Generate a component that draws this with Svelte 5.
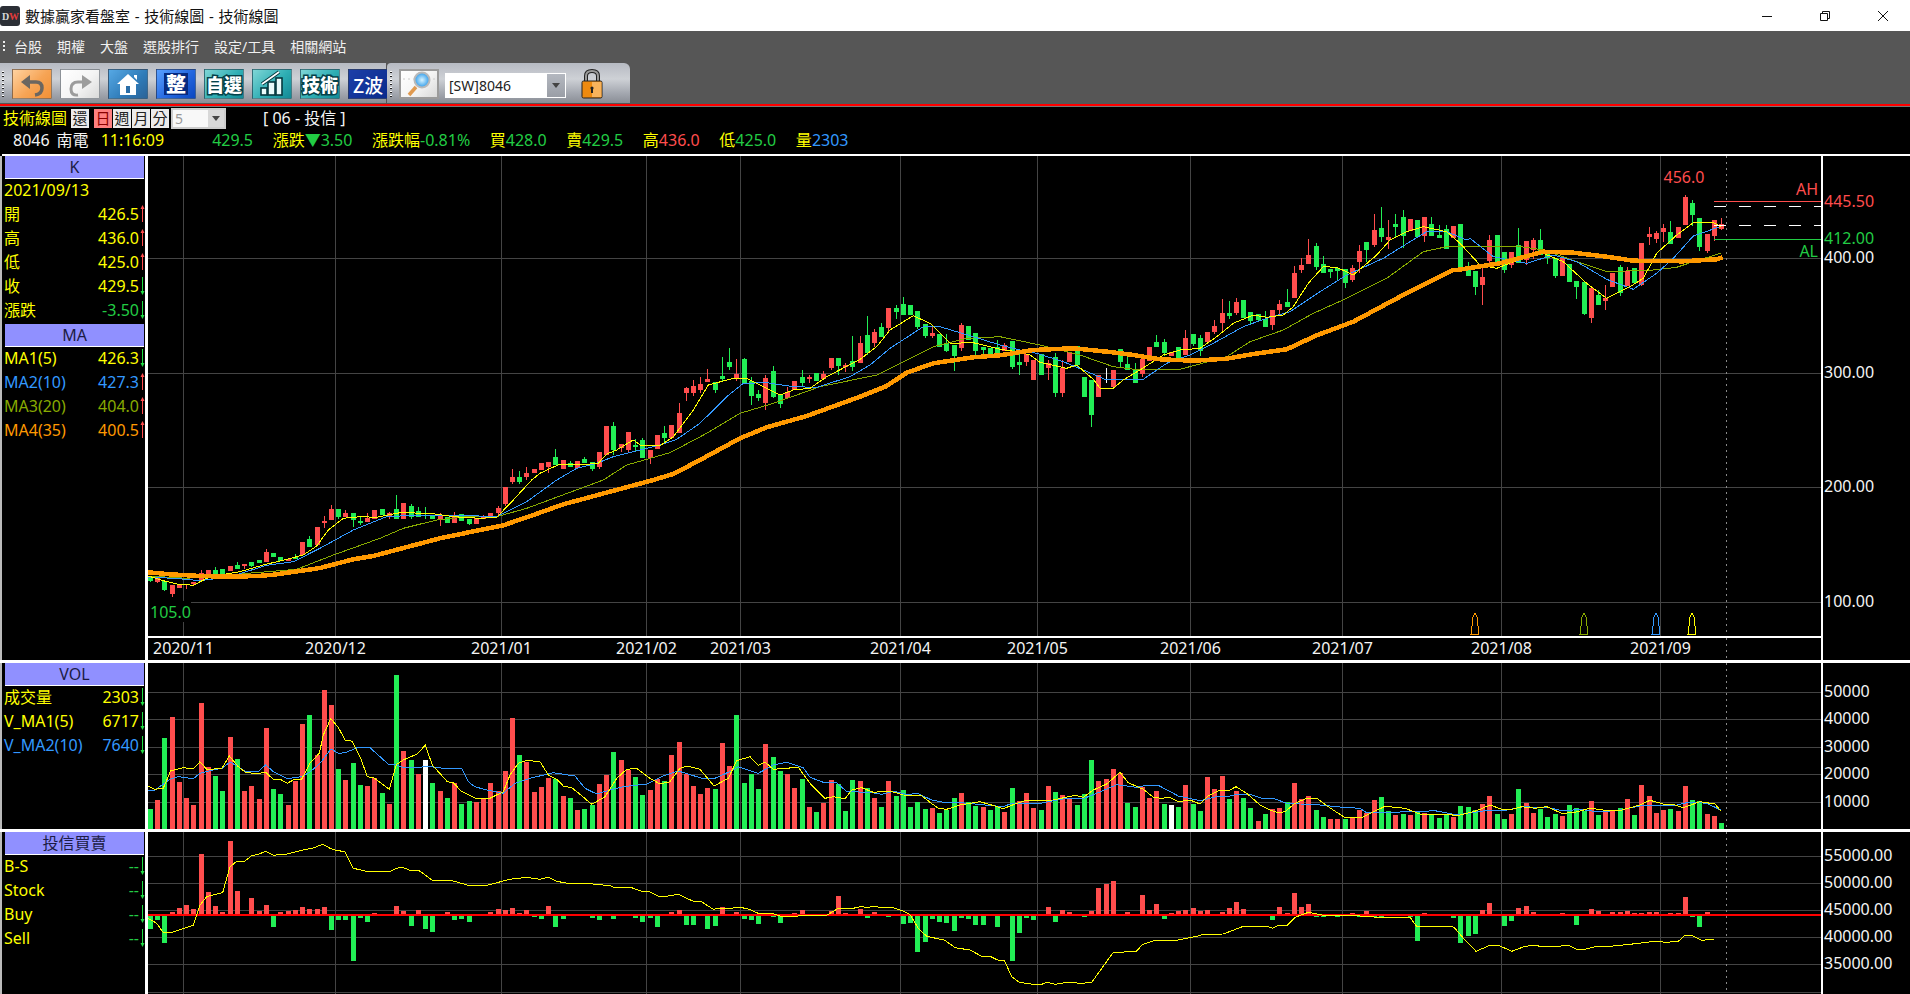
<script>
  const barX = (i) => Math.round(148 + 7.24 * i);

  const vol = [-20,29,-91,112,47,31,24,126,62,-53,-38,92,-70,38,43,30,101,-40,-35,24,48,105,-114,74,139,124,-60,49,-66,-44,43,51,-36,25,-154,78,-69,55,69,-46,38,-31,46,-25,-28,27,30,46,38,
    58,111,-74,67,37,42,51,-50,33,-31,19,-20,-24,45,54,-77,69,59,-52,-34,39,50,-48,74,87,55,43,35,41,-40,86,63,-114,-46,-55,-40,85,-72,-58,55,41,-50,22,-17,26,49,-45,-18,-49,48,-41,31,-22,48,-33,-39,-22,-27,-20,21,-16,-19,-31,36,-27,
    -23,22,-19,-23,17,-41,28,36,21,-19,43,-37,34,31,-24,-35,-69,48,50,60,56,-26,-22,42,31,38,-25,24,-22,44,-25,-18,52,40,53,-30,38,-31,-21,8,-15,20,21,-27,46,30,33,-19,-12,10,10,-10,11,19,16,29,-32,-18,14,
    -15,14,-18,16,-14,-11,-14,12,-23,-22,-19,25,33,-15,-10,15,-40,26,16,-20,-12,-15,13,-24,-21,-18,28,-14,19,19,-21,30,-14,44,33,16,19,-20,18,43,-29,-28,15,13,-6];
  const volWhite = new Set([38, 141]);

  const flow = [-14,-5,-28,2,6,9,5,60,22,8,2,73,23,0,16,3,9,-12,2,3,4,7,5,5,7,-15,-5,-5,-46,-3,-7,1,0,0,8,3,-11,4,-14,-17,-1,2,-5,-4,-7,0,0,2,5,
    4,6,1,4,-2,-4,8,-12,-4,-1,0,0,-3,-5,0,-4,-1,0,-3,-7,-3,-12,0,2,4,-10,-10,-1,-14,-11,7,-1,2,-4,-5,-9,0,-2,-8,0,1,4,-1,-1,0,3,18,1,0,5,-3,2,-1,-2,-1,-9,-8,-37,-27,-4,-7,-8,-16,-3,-4,
    -10,-10,0,-12,0,-46,-18,-3,-5,-1,7,-7,4,2,0,-2,3,26,30,33,0,2,0,19,4,10,-4,1,3,4,6,3,4,0,2,6,12,5,-1,0,0,-5,7,1,21,7,10,-2,-2,-1,-2,0,1,-2,3,-2,-2,0,0,
    0,-2,-26,1,0,0,0,-3,-28,-21,-19,4,11,0,-11,-6,6,8,2,0,0,0,1,-1,-10,0,5,3,0,2,2,3,1,1,2,2,0,1,1,17,-2,-12,2,0,0];

  // candles: colour, body top, body bottom, wick top, wick bottom (in 3x crop rows, by origin)
  const c1 = [['g',352,364,352,366],['r',355,365,352,368],['g',364,390,362,393],['r',375,402,375,410],['r',372,384,372,384],['r',372,375,372,388],['r',366,372,366,376],['r',340,360,330,362],['r',330,350,330,350],['g',330,342,322,342],['g',326,342,326,342],['r',318,334,318,334],['g',316,328,306,328],['r',312,318,312,328],['g',306,318,306,322],['g',300,310,300,310],['r',276,306,268,306],['g',280,292,280,292],['g',292,302,292,304],['r',296,304,296,304],['g',290,296,282,296],['r',246,286,246,286],['g',237,260,228,260],['r',201,254,201,254],['r',183,188,168,204],['r',147,180,135,180],['g',147,172,147,178],['r',158,172,150,172],['g',160,180,160,202],['g',183,188,168,194],['r',175,186,158,186],['r',150,178,150,178],['g',147,166,147,166],['r',160,172,155,178],['g',147,177,105,177],['r',129,177,129,177],['g',138,172,132,178],['g',154,170,140,170],['g',159,160,140,178],['g',165,178,165,178],['r',165,178,160,198],['g',170,188,170,188],['r',165,190,156,190],['g',162,184,162,184],['g',177,192,177,194],['r',174,192,174,192],['r',168,178,166,178],['r',158,172,158,172],['r',144,158,138,165],['r',82,132,82,138]];
  const c2 = [['r',590,606,568,612],['g',590,606,574,612],['r',578,590,562,600],['r',567,580,567,580],['r',549,570,549,570],['r',545,562,545,578],['g',531,555,507,555],['r',540,568,540,568],['g',548,562,544,562],['r',543,565,543,565],['g',537,550,530,550],['g',546,568,546,574],['r',516,560,516,566],['r',438,525,438,525],['g',438,510,426,525],['r',492,505,492,516],['r',456,510,456,516],['g',495,501,478,515],['g',480,534,475,534],['r',510,534,510,552],['r',465,507,465,507],['g',459,474,438,490],['r',435,475,435,475],['r',399,460,370,460],['r',324,339,320,362],['r',318,340,300,348],['r',312,330,292,338],['r',297,306,267,306],['g',306,330,306,338],['g',288,297,232,306],['g',246,261,205,270],['r',282,297,238,303],['g',237,312,234,312],['g',303,348,292,375],['g',342,354,330,362],['r',294,370,285,390],['g',273,351,258,354],['g',345,372,345,384],['r',336,354,322,354],['r',303,330,303,330],['g',291,309,270,318],['r',291,297,284,308],['g',279,303,279,303],['r',282,296,273,296],['r',234,264,234,270],['g',234,258,234,285],['r',254,261,250,275],['g',243,261,168,273],['r',189,249,168,249],['g',165,219,108,225],['r',156,189,147,200],['g',141,171,129,171],['r',84,144,84,153],['g',84,96,75,117],['g',72,105,52,105],['g',75,105,75,105],['g',93,141,93,147],['g',132,168,132,174],['r',159,168,135,174],['g',162,200,162,200],['g',189,213,162,216],['g',195,228,195,272],['r',135,204,130,213],['g',138,180,138,180],['g',159,212,159,225],['g',201,210,201,225],['g',204,225,204,225],['g',200,222,180,222]];
  const c3 = [['r',495,513,490,513],['g',483,561,483,567],['g',546,555,520,585],['r',522,546,522,558],['r',540,600,540,600],['g',522,585,522,585],['r',550,565,540,600],['g',531,640,520,650],['r',565,640,540,650],['r',516,546,516,546],['g',498,555,498,565],['g',591,650,591,650],['g',600,705,600,741],['r',585,650,585,650],['w',565,610,565,610],['r',570,620,570,620],['g',507,546,507,565],['g',552,570,528,570],['g',568,610,550,610],['r',538,582,530,590],['r',501,543,501,543],['g',486,501,465,501],['g',486,519,478,528],['r',516,528,516,528],['g',501,533,501,533],['r',474,525,450,525],['g',462,492,462,498],['g',474,513,466,528],['r',456,486,456,486],['r',438,456,420,462],['r',399,430,357,453],['g',399,408,363,417],['r',366,399,354,405],['g',360,414,360,414],['g',396,423,396,432],['g',402,420,402,423],['g',417,441,394,441],['r',390,435,390,450],['r',372,390,360,405],['g',366,381,327,381],['r',279,354,258,354],['r',255,270,234,278],['r',225,252,177,252],['g',198,261,189,270],['g',252,279,228,279],['g',267,276,267,294],['g',264,272,264,300],['g',267,309,267,324],['r',264,300,255,306],['r',213,246,195,279],['g',186,210,186,246],['r',150,195,102,200],['g',144,171,81,186],['r',171,180,120,207],['g',132,141,102,170]];
  const c4 = [['g',201,258,180,295],['r',207,243,207,243],['g',210,261,210,261],['r',201,258,201,275],['g',222,258,200,258],['g',255,264,225,264],['g',237,297,225,297],['r',228,264,228,264],['g',222,355,222,355],['g',360,378,336,378],['g',363,411,363,435],['r',381,405,355,465],['r',270,333,255,345],['g',255,336,255,336],['g',306,360,306,370],['r',306,345,306,355],['g',285,340,235,340],['r',273,330,273,345],['r',270,300,265,328],['g',270,315,237,315],['g',306,325,306,342],['g',324,378,324,384],['r',324,378,324,378],['g',342,396,342,396],['g',393,411,393,447],['g',396,492,396,495],['r',414,504,414,520],['g',435,465,420,465],['r',444,453,405,480],['r',369,411,369,411],['g',351,429,345,438],['r',363,408,350,408],['g',354,399,354,399],['r',279,405,279,408],['r',252,261,232,285],['r',249,267,243,279],['r',234,245,222,275],['g',246,282,213,282],['r',231,264,231,264],['r',141,225,135,225],['g',159,195,150,228],['g',204,291,204,303],['r',252,303,252,309],['r',210,258,210,272],['r',222,237,204,240]];

  const toCandle = (oy) => (c) => ({ c: c[0], t: oy + c[1] / 3, b: oy + c[2] / 3, wt: oy + c[3] / 3, wb: oy + c[4] / 3 });
  const candles = [...c1.map(toCandle(460)), ...c2.map(toCandle(280)), ...c3.map(toCandle(180)), ...c4.map(toCandle(150))];

  // polyline helper: groups of [ox, oy, [X,Y,X,Y...]] read from 3x crops
  function line(groups) {
    const out = [];
    let last = -1;
    for (const [ox, oy, p] of groups) {
      for (let k = 0; k < p.length; k += 2) {
        const x = ox + p[k] / 3;
        const y = oy + p[k + 1] / 3;
        if (x > last) { out.push(`${x.toFixed(1)},${y.toFixed(1)}`); last = x; }
      }
    }
    return out.join(' ');
  }

  const ma4 = line([
    [120,460,[85,337,150,343,240,348,330,350,415,348,460,344,540,333,600,324,700,298,760,288,850,264,960,235,1080,210,1150,196]],
    [120,460,[1240,165,1330,133]],
    [500,280,[460,600,520,582,600,540,720,475,800,442,920,408,1080,350,1160,318,1220,278,1300,250,1420,232,1500,226]],
    [1000,180,[100,510,220,505,330,516,400,525,480,538,580,542,680,536,760,522,860,508,950,466,1060,425,1200,350]],
    [1000,180,[1300,300,1360,270]],
    [1400,150,[170,360,300,340,430,305,520,308,620,320,700,332,850,334,950,328,968,322]]
  ]);
  const ma1 = line([
    [120,460,[85,348,130,362,170,372,220,376,260,355,300,345,360,335,430,315,500,298,550,285,590,258,625,210,670,175,720,170,770,172,840,158,930,160,1000,170,1080,175,1130,172,1180,120]],
    [500,280,[95,600,120,580,180,552,270,552,295,550,320,522,350,510,400,480,425,498,480,497,520,470,580,390,625,315,700,295,740,295,800,325,840,345,880,330,930,325,980,290,1080,238,1130,200,1170,150,1240,107,1290,130,1350,190,1420,188,1500,208]],
    [1000,180,[50,515,90,525,120,547,200,565,230,555,280,598,300,625,340,625,370,600,420,570,490,525,540,510,600,505,650,470,700,430,760,405,800,412,850,405,880,380,925,310,970,260,1010,262,1060,285,1130,225,1170,180]],
    [1000,180,[1220,155,1270,140,1340,155,1380,190]],
    [1400,150,[130,240,175,255,240,345,290,355,340,335,430,310,490,335,560,400,620,445,690,410,730,385,770,310,830,255,880,218,940,218,962,230]]
  ]);
  const ma2 = line([
    [120,460,[85,352,165,355,240,362,330,350,440,316,520,305,600,265,700,210,800,170,900,165,1000,165,1130,170,1220,125]],
    [500,280,[170,600,230,565,290,550,340,530,420,510,480,495,530,478,600,430,680,350,730,310,800,308,880,320,950,322,1050,290,1110,255,1170,205,1270,140,1320,140,1420,170,1500,195]],
    [1000,180,[60,510,110,520,190,545,250,570,320,600,430,598,500,550,570,525,640,490,730,440,800,415,870,395,960,335,1040,285,1150,235,1230,185]],
    [1000,180,[1280,155,1340,155,1400,180]],
    [1400,150,[60,255,160,245,210,265,280,320,380,340,460,315,530,335,620,388,700,418,770,370,820,325,880,258,960,230]]
  ]);
  const ma3 = line([
    [120,460,[85,348,200,355,530,328,640,285,780,235,850,205,950,180,1040,170,1130,170,1220,145]],
    [500,280,[310,600,380,555,510,518,620,460,720,400,820,370,960,320,1130,285,1190,255,1300,200,1400,175,1500,170]],
    [1000,180,[120,495,240,525,340,560,420,570,540,568,680,530,750,485,850,450,940,400,1040,355,1160,295]],
    [1000,180,[1270,215,1340,200]],
    [1400,150,[60,310,130,293,230,290,350,288,430,300,560,345,620,365,760,360,830,352,880,335,962,310]]
  ]);

  const vma1 = line([
    [0,650,[444,408,465,418,490,415,512,362,550,353,580,356,600,335,620,358,665,356,688,318,715,350,735,366,770,372,796,366,820,388,841,388,862,400,885,387,905,387,930,340,958,310,970,255,992,206,1015,232,1035,270,1057,274,1082,325,1102,380,1123,384,1168,418,1189,344,1210,330,1252,312,1276,285,1297,345,1342,395,1360,398,1384,424,1424,444,1470,445]],
    [490,690,[40,305,60,255,85,220,110,211,150,215,175,255,200,268,220,288,245,293,270,313,305,343,345,320,380,265,410,238,440,235,480,265,510,282,540,275,570,235,590,228,630,238,672,288,715,265,740,212,780,200,805,226,825,216,850,238,925,232,960,280,1005,325,1030,320,1065,326,1085,300,1115,293,1150,307,1200,303,1240,315,1295,317,1320,337,1345,355,1370,358,1410,345]],
    [970,690,[30,335,75,348,100,356,140,340,170,331,250,330,315,316,340,322,370,300,410,282,450,247,475,278,520,298,550,322,575,325,600,322,625,335,660,330,690,342,715,318,745,303,780,300,798,290,830,310,870,345,900,360,925,368,945,365,975,340,1010,325,1040,325,1075,350,1125,383,1180,381,1205,368,1245,349]],
    [1400,620,[15,565,60,582,145,582,170,588,230,572,270,555,305,568,335,568,365,560,405,565,440,560,485,580,520,578,570,565,610,570,665,570,720,555,750,541,790,552,815,552,850,563,900,545,945,552,962,572]]
  ]);
  const vma2 = line([
    [0,650,[444,420,465,420,510,388,535,380,580,386,600,370,646,358,665,356,690,336,715,350,735,364,775,365,797,344,820,365,862,386,905,380,930,366,960,340,993,297,1015,310,1035,308,1075,292,1110,293,1140,320,1168,345,1189,344,1210,353,1290,350,1340,356,1385,355,1405,395,1424,410,1460,420]],
    [490,690,[40,310,75,280,120,265,190,248,255,258,285,295,320,312,360,300,400,290,470,282,520,258,565,243,640,266,672,266,730,240,745,230,805,250,850,225,890,217,940,233,960,262,1000,277,1040,278,1070,305,1140,307,1175,313,1210,304,1250,313,1285,311,1325,330,1360,337,1400,337]],
    [970,690,[100,350,125,340,200,342,250,332,290,325,340,326,380,310,440,284,500,292,530,286,565,286,625,318,690,332,740,320,780,318,800,313,840,313,875,325,910,325,950,340,1050,345,1120,352,1170,355,1190,368,1250,367]],
    [1400,620,[45,575,105,572,170,585,250,573,310,572,370,560,450,564,490,573,540,568,590,575,650,572,720,558,770,556,830,555,870,546,920,550,962,570]]
  ]);
  const flowLine = line([
    [0,650,[444,805,470,820,490,848,520,846,560,832,580,826,600,765,620,740,650,732,668,728,690,650,710,634,735,633,755,617,775,613,797,604,820,616,860,612,900,602,940,594,968,583,990,595,1008,601,1035,605,1060,655,1100,664,1170,664,1190,655,1208,652,1232,662,1255,660,1297,691,1352,691,1405,706,1460,706]],
    [490,690,[60,568,110,562,150,568,175,562,200,574,232,580,300,581,360,587,370,592,425,593,455,604,480,606,505,619,530,619,565,613,610,634,632,634,670,658,690,654,720,655,750,652,775,657,805,670,850,671,870,678,925,678,950,676,1010,676,1045,655,1090,655,1110,650,1135,652,1150,649,1170,652,1205,652,1240,663,1260,674,1285,715,1310,739,1365,751,1395,773,1440,780]],
    [970,690,[35,799,60,799,85,811,103,811,125,860,148,877,190,883,215,883,230,877,255,883,290,877,335,880,365,877,430,787,498,785,517,764,555,751,615,752,680,739,700,733,760,732,820,709,890,709,908,715,925,706,952,706,975,682,1015,667,1055,675,1095,676,1170,678,1225,682,1290,682]],
    [1400,620,[30,892,50,919,150,919,162,922,195,960,228,994,270,976,296,976,335,994,375,979,405,976,420,979,475,979,505,976,530,988,555,988,590,979,630,979,690,973,740,967,760,964,800,967,835,964,855,946,880,948,905,961,941,958]]
  ]);

  const monthX = [183, 335, 501, 646, 740, 900, 1037, 1190, 1342, 1501, 1660];
  const monthLabels = ['2020/11','2020/12','2021/01','2021/02','2021/03','2021/04','2021/05','2021/06','2021/07','2021/08','2021/09'];
  const markers = [[1475,'#ff9900'],[1584,'#88aa00'],[1656,'#3399ff'],[1692,'#ffff00']];

  const kRows = [['開','426.5','up'],['高','436.0','up'],['低','425.0','up'],['收','429.5','down']];
  const maRows = [['MA1(5)','426.3','down','yel'],['MA2(10)','427.3','up','blu'],['MA3(20)','404.0','up','oli'],['MA4(35)','400.5','up','ora']];
  const volRows = [['成交量','2303','yel'],['V_MA1(5)','6717','yel'],['V_MA2(10)','7640','blu']];
  const flowRows = ['B-S','Stock','Buy','Sell'];

  const bar = { r: '#ff4d4d', g: '#22ee55', w: '#ffffff' };
</script>

{#snippet arrow(dir)}
  <svg class="arr" width="5" height="18" viewBox="0 0 5 18">
    {#if dir === 'up'}
      <path d="M2.5 17V1" stroke="#ff4d4d" fill="none"/><path d="M0.5 4L2.5 0L4.5 4Z" fill="#ff4d4d"/>
    {:else}
      <path d="M2.5 0V16" stroke="#22dd44" fill="none"/><path d="M0.5 14L2.5 18L4.5 14Z" fill="#22dd44"/>
    {/if}
  </svg>
{/snippet}

{#snippet grid(top, bottom, ys)}
  {#each ys as y}<rect x="148" y={y} width="1673" height="1" fill="#444"/>{/each}
  {#each monthX as x}<rect x={x} y={top} width="1" height={bottom - top} fill="#444"/>{/each}
{/snippet}

<div class="app">
  <header class="title">
    <svg class="logo" width="20" height="20" viewBox="0 0 20 20">
      <rect width="20" height="20" rx="3" fill="#2b2f36"/>
      <text x="2" y="14" class="logotxt" fill="#d8d8d8">D</text>
      <text x="9" y="14" class="logotxt" fill="#e23b3b">W</text>
    </svg>
    <span class="ttl">數據贏家看盤室 - 技術線圖 - 技術線圖</span>
    <div class="win">
      <svg width="12" height="12" viewBox="0 0 12 12"><path d="M1 6.5H11" stroke="#111" fill="none"/></svg>
      <svg width="12" height="12" viewBox="0 0 12 12"><path d="M1.5 3.5H8.5V10.5H1.5ZM3.5 3.5V1.5H10.5V8.5H8.5" stroke="#111" fill="none"/></svg>
      <svg width="12" height="12" viewBox="0 0 12 12"><path d="M1 1L11 11M11 1L1 11" stroke="#111" fill="none"/></svg>
    </div>
  </header>

  <nav class="menu">
    <i class="grip"></i>
    <span>台股</span><span>期權</span><span>大盤</span><span>選股排行</span><span>設定/工具</span><span>相關網站</span>
  </nav>

  <div class="toolbar">
    <div class="tb tb1">
      <i class="grip dark"></i>
      <button class="btn orange" aria-label="back">
        <svg width="40" height="30" viewBox="0 0 40 30"><path d="M18 13H24Q30 13 30 19T23 26" stroke="#6b6660" stroke-width="3.5" fill="none"/><path d="M9 13L18 6V20Z" fill="#6b6660"/></svg>
      </button>
      <button class="btn white" aria-label="forward">
        <svg width="40" height="30" viewBox="0 0 40 30"><path d="M22 13H18Q11 13 11 20T18 26" stroke="#9c9c9c" stroke-width="3" fill="none"/><path d="M32 13L22 6V20Z" fill="#9c9c9c"/></svg>
      </button>
      <button class="btn home" aria-label="home">
        <svg width="40" height="30" viewBox="0 0 40 30"><path d="M20 5L31 15H28V26H12V15H9ZM26 6H29V11L26 8Z" fill="#fff"/><rect x="18" y="17" width="4" height="7" fill="#2a6ea8"/></svg>
      </button>
      <button class="btn blue"><b class="sq">整</b></button>
      <button class="btn teal"><b class="tt">自選</b></button>
      <button class="btn teal" aria-label="chart">
        <svg width="40" height="30" viewBox="0 0 40 30"><g fill="#e9fbfb" stroke="#06393f" stroke-width="1.6"><rect x="9" y="19" width="6" height="7"/><rect x="16" y="13" width="7" height="13"/><rect x="24" y="9" width="6" height="17"/></g><path d="M10 15L20 8L27 3" stroke="#06393f" stroke-width="3.5" fill="none"/><path d="M10 15L20 8L27 3" stroke="#fff" stroke-width="1.6" fill="none"/></svg>
      </button>
      <button class="btn teal"><b class="tt">技術</b></button>
      <button class="btn navy"><b class="zw">Z波</b></button>
    </div>
    <div class="tb tb2">
      <i class="grip dark"></i>
      <button class="btn white lens" aria-label="search">
        <svg width="40" height="30" viewBox="0 0 40 30"><defs><radialGradient id="gl"><stop offset="0" stop-color="#d8f4ff"/><stop offset="1" stop-color="#2f9bea"/></radialGradient></defs><path d="M4 10H36" stroke="#ccc" stroke-dasharray="2 3" fill="none"/><path d="M17 18L10 26" stroke="#e09a50" stroke-width="3.5" fill="none"/><circle cx="23" cy="11" r="7.5" fill="url(#gl)" stroke="#b9b9b9" stroke-width="2"/></svg>
      </button>
      <div class="combo"><span>[SW]8046</span><i class="caret"><em></em></i></div>
      <svg class="lock" width="22" height="30" viewBox="0 0 22 30">
        <path d="M5 13V7Q5 2 11 2T17 7V13" fill="none" stroke="#222" stroke-width="4"/>
        <path d="M5 13V7Q5 2 11 2T17 7V13" fill="none" stroke="#9a9a9a" stroke-width="2"/>
        <rect x="1" y="12" width="20" height="17" rx="1.5" fill="#ee8a10" stroke="#222"/>
        <rect x="11" y="13" width="9.5" height="15" fill="#f8b35c"/>
        <path d="M11 18V24" stroke="#222" stroke-width="2"/><circle cx="11" cy="19" r="1.6" fill="#222"/>
      </svg>
    </div>
  </div>
  <div class="redline"></div>

  <section class="info">
    <div class="irow one">
      <span class="yel big">技術線圖</span>
      <span class="tab back">還</span>
      <div class="tabs"><span class="tab on">日</span><span class="tab">週</span><span class="tab">月</span><span class="tab">分</span></div>
      <div class="mini"><span>5</span><i class="caret"><em></em></i></div>
      <span class="wht sel">[ 06 - 投信 ]</span>
    </div>
    <div class="irow two">
      <span class="wht">8046</span><span class="wht name">南電</span><span class="yel time">11:16:09</span>
      <div class="quotes">
        <span class="grn">429.5</span>
        <span><b class="yel">漲跌</b><b class="grn">▼3.50</b></span>
        <span><b class="yel">漲跌幅</b><b class="grn">-0.81%</b></span>
        <span><b class="yel">買</b><b class="grn">428.0</b></span>
        <span><b class="yel">賣</b><b class="grn">429.5</b></span>
        <span><b class="yel">高</b><b class="red">436.0</b></span>
        <span><b class="yel">低</b><b class="grn">425.0</b></span>
        <span><b class="yel">量</b><b class="blu">2303</b></span>
      </div>
    </div>
  </section>

  <div class="topline"></div>

  <section class="pane main">
    <aside class="side">
      <div class="hd">K</div>
      <div class="row yel">2021/09/13</div>
      {#each kRows as r}
        <div class="row"><span class="yel">{r[0]}</span><span class="val yel">{r[1]}</span>{@render arrow(r[2])}</div>
      {/each}
      <div class="row"><span class="yel">漲跌</span><span class="val grn">-3.50</span>{@render arrow('down')}</div>
      <div class="hd second">MA</div>
      {#each maRows as r}
        <div class="row"><span class={r[3]}>{r[0]}</span><span class="val {r[3]}">{r[1]}</span>{@render arrow(r[2])}</div>
      {/each}
    </aside>
    <div class="col">
      <svg class="plot" width="1673" height="480" viewBox="148 156 1673 480">
        {@render grid(156, 636, [258, 373, 487, 602])}
        <rect x="148" y="601" width="43" height="21" fill="#000"/>
        <text x="150" y="618" class="t" fill="#22cc44">105.0</text>
        {#each candles as c, i}
          <rect x={barX(i) + 2} y={c.wt} width="1" height={c.wb - c.wt} fill={bar[c.c]}/>
          {#if c.c !== 'w'}<rect x={barX(i)} y={c.t} width="5" height={Math.max(1, c.b - c.t)} fill={bar[c.c]}/>{/if}
        {/each}
        <polyline points={ma3} class="ln" stroke="#88aa00"/>
        <polyline points={ma2} class="ln" stroke="#3399ff"/>
        <polyline points={ma1} class="ln" stroke="#ffff00"/>
        <polyline points={ma4} class="ln heavy" stroke="#ff9900"/>
        {#each markers as m}
          <path d="M{m[0] - 4} 634.5H{m[0] + 4}L{m[0] + 2} 617L{m[0]} 613L{m[0] - 2} 617Z" fill="none" stroke={m[1]}/>
        {/each}
        <rect x="1714" y="201" width="107" height="1" fill="#ff4d4d"/>
        <rect x="1714" y="239" width="107" height="1" fill="#22cc44"/>
        <path d="M1714 206.5H1821M1714 225.5H1821" stroke="#fff" stroke-dasharray="12 13" fill="none"/>
        <path d="M1726.5 156V636" class="dash"/>
        <text x="1684" y="183" text-anchor="middle" class="t" fill="#ff4d4d">456.0</text>
        <text x="1818" y="195" text-anchor="end" class="t" fill="#ff4d4d">AH</text>
        <text x="1818" y="257" text-anchor="end" class="t" fill="#22cc44">AL</text>
      </svg>
      <div class="sep2"></div>
      <svg class="plot" width="1673" height="22" viewBox="148 638 1673 22">
        {#each monthLabels as m, i}
          <text x={monthX[i] + 0.5} y="654" text-anchor="middle" class="t" fill="#f4f4f4">{m}</text>
        {/each}
        <path d="M1726.5 638V660" class="dash"/>
      </svg>
    </div>
    <svg class="axis" width="87" height="504" viewBox="1823 156 87 504">
      <text x="1824" y="207" class="t" fill="#ff4d4d">445.50</text>
      <text x="1824" y="244" class="t" fill="#22cc44">412.00</text>
      <text x="1824" y="263" class="t" fill="#f4f4f4">400.00</text>
      <text x="1824" y="378" class="t" fill="#f4f4f4">300.00</text>
      <text x="1824" y="492" class="t" fill="#f4f4f4">200.00</text>
      <text x="1824" y="607" class="t" fill="#f4f4f4">100.00</text>
    </svg>
  </section>

  <div class="sep3"></div>

  <section class="pane volp">
    <aside class="side">
      <div class="hd">VOL</div>
      {#each volRows as r}
        <div class="row"><span class={r[2]}>{r[0]}</span><span class="val {r[2]}">{r[1]}</span>{@render arrow('down')}</div>
      {/each}
    </aside>
    <svg class="plot" width="1673" height="166" viewBox="148 663 1673 166">
      {@render grid(663, 829, [692, 719, 747, 774, 802])}
      {#each vol as v, i}
        <rect x={barX(i)} y={829 - Math.abs(v)} width="5" height={Math.abs(v)} fill={volWhite.has(i) ? '#fff' : v > 0 ? bar.r : bar.g}/>
      {/each}
      <polyline points={vma2} class="ln" stroke="#3399ff"/>
      <polyline points={vma1} class="ln" stroke="#ffff00"/>
      <path d="M1726.5 663V829" class="dash"/>
    </svg>
    <svg class="axis" width="87" height="166" viewBox="1823 663 87 166">
      <text x="1824" y="697" class="t" fill="#f4f4f4">50000</text>
      <text x="1824" y="724" class="t" fill="#f4f4f4">40000</text>
      <text x="1824" y="752" class="t" fill="#f4f4f4">30000</text>
      <text x="1824" y="779" class="t" fill="#f4f4f4">20000</text>
      <text x="1824" y="807" class="t" fill="#f4f4f4">10000</text>
    </svg>
  </section>

  <div class="sep3"></div>

  <section class="pane flowp">
    <aside class="side">
      <div class="hd">投信買賣</div>
      {#each flowRows as r}
        <div class="row"><span class="yel">{r}</span><span class="val grn">--</span>{@render arrow('down')}</div>
      {/each}
    </aside>
    <svg class="plot" width="1673" height="162" viewBox="148 832 1673 162">
      {@render grid(832, 994, [856, 883, 910, 937, 964, 992])}
      {#each flow as v, i}
        {#if v !== 0}
          <rect x={barX(i)} y={v > 0 ? 914 - v : 915} width="5" height={Math.abs(v)} fill={v > 0 ? bar.r : bar.g}/>
        {/if}
      {/each}
      <rect x="148" y="914" width="1673" height="2" fill="#ff0000"/>
      <polyline points={flowLine} class="ln" stroke="#ffff00"/>
      <path d="M1726.5 832V994" class="dash"/>
    </svg>
    <svg class="axis" width="87" height="162" viewBox="1823 832 87 162">
      <text x="1824" y="861" class="t" fill="#f4f4f4">55000.00</text>
      <text x="1824" y="888" class="t" fill="#f4f4f4">50000.00</text>
      <text x="1824" y="915" class="t" fill="#f4f4f4">45000.00</text>
      <text x="1824" y="942" class="t" fill="#f4f4f4">40000.00</text>
      <text x="1824" y="969" class="t" fill="#f4f4f4">35000.00</text>
    </svg>
  </section>
</div>

<style>
  :global(body) { margin: 0; background: #000; }
  .app {
    width: 1910px; height: 994px; overflow: hidden; background: #000;
    display: flex; flex-direction: column;
    font: 16px/24px "Noto Sans", "Noto Sans CJK TC", sans-serif;
    color: #fff;
  }
  .title {
    height: 31px; background: #fff; color: #111; display: flex; align-items: center;
    font-size: 15px; flex: none; word-spacing: 0.8px;
  }
  .logo { margin: 0 5px 0 0; flex: none; }
  .logotxt { font: 700 10px "Liberation Serif", serif; }
  .win { margin-left: auto; display: flex; gap: 46px; padding-right: 21px; }
  .win svg { display: block; }

  .menu {
    height: 32px; background: #565656; display: flex; align-items: center;
    color: #f0f0f0; font-size: 14px; flex: none; gap: 15px; padding-left: 3px;
  }
  .menu .grip { margin-right: -6px; height: 12px; }
  .grip {
    width: 2px; height: 30px; flex: none;
    background: repeating-linear-gradient(#eee 0 2px, transparent 2px 4px);
  }
  .grip.dark { background: repeating-linear-gradient(#fff 0 1px, #222 1px 2px, transparent 2px 4px); height: 26px; }

  .toolbar { height: 41px; background: #565656; display: flex; flex: none; }
  .tb {
    height: 40px; display: flex; align-items: center; box-sizing: border-box; padding-top: 2px;
    background: linear-gradient(#b6bac2 0, #ced1d6 40%, #a4a8b0 75%, #8a8e96 100%);
  }
  .tb1 { width: 386px; padding-left: 2px; gap: 8px; }
  .tb2 { width: 243px; margin-left: 1px; border-radius: 4px 6px 0 0; padding-left: 3px; }
  .btn {
    width: 40px; height: 30px; padding: 0; border: 1px solid rgba(60, 70, 80, .55); box-sizing: border-box;
    flex: none; display: flex; align-items: center; justify-content: center; overflow: hidden;
    font: 700 17px/1 "Noto Sans CJK TC", sans-serif; color: #fff;
  }
  .btn svg { flex: none; }
  .orange { background: linear-gradient(135deg, #ffd2a0, #f6a455 55%, #f29035); }
  .white { background: linear-gradient(135deg, #fff, #f4f4f4 55%, #d9d9d9); }
  .home { background: linear-gradient(135deg, #56a8e4, #2f7bb8 60%, #2a6398); }
  .blue { background: linear-gradient(135deg, #5aa0ff, #2468e0 55%, #0b46c0); }
  .teal { background: linear-gradient(135deg, #7fd6d6, #2eaeb4 55%, #128a96); }
  .navy { background: linear-gradient(135deg, #1c3fa8, #0a2a8c); }
  .sq { background: #062a80; padding: 1px 2px; font-size: 20px; color: #fff; }
  .tt { color: #fff; font-size: 18px; letter-spacing: 0; -webkit-text-stroke: 3px #05424a; paint-order: stroke fill; white-space: nowrap; }
  .zw { color: #fff; font-size: 19px; font-weight: 500; white-space: nowrap; }
  .lens { margin-left: 7px; border: 2px solid #9b9b9b; }
  .combo {
    width: 121px; height: 25px; margin: 2px 0 0 6px; background: #fff; border: 1px solid #fff; box-sizing: border-box;
    display: flex; align-items: stretch; justify-content: space-between;
    color: #222; font-size: 14px; line-height: 23px;
  }
  .combo span { padding-left: 3px; }
  .caret { width: 18px; background: linear-gradient(#b4b8c0, #9a9ea6); display: flex; align-items: center; justify-content: center; flex: none; }
  .caret em { width: 0; height: 0; border: 4px solid transparent; border-top: 5px solid #444; border-bottom: 0; }
  .lock { margin-left: 15px; flex: none; }

  .redline { height: 2px; background: #f00; flex: none; border-bottom: 1px solid #777; }

  .info { height: 47px; background: #000; flex: none; box-sizing: border-box; padding-left: 3px; }
  .irow { display: flex; align-items: center; white-space: nowrap; }
  .one { height: 22px; }
  .big { width: 68px; flex: none; }
  .tab { background: #ececec; color: #222; width: 18px; height: 19px; line-height: 18px; text-align: center; display: block; flex: none; font-size: 15px; }
  .tab.back { margin-right: 5px; }
  .tabs { display: flex; gap: 1px; }
  .tab.on { background: #ff8080; color: #8a0000; }
  .mini {
    width: 55px; height: 21px; margin-left: 2px; background: #f8f8f8; border: 2px solid #ccc; box-sizing: border-box;
    color: #999; font-size: 14px; line-height: 17px; display: flex; justify-content: space-between; padding-left: 2px;
  }
  .mini .caret { width: 16px; background: #d8d8d8; }
  .sel { margin-left: 37px; }
  .two { height: 22px; padding-left: 10px; }
  .name { margin-left: 7px; }
  .time { margin-left: 12px; }
  .quotes { display: flex; gap: 19.6px; margin-left: 48px; }
  .quotes b { font-weight: 400; }

  .topline { height: 2px; background: #fff; flex: none; margin-left: 2px; }
  .sep3 { height: 3px; background: #fff; flex: none; }
  .sep2 { height: 2px; background: #fff; }

  .pane { display: flex; flex: none; align-items: stretch; }
  .main { height: 504px; }
  .volp { height: 166px; }
  .flowp { height: 162px; }
  .col { display: flex; flex-direction: column; width: 1673px; flex: none; }
  .plot { display: block; flex: none; shape-rendering: crispEdges; }
  .axis { display: block; flex: none; margin-left: 2px; box-shadow: -2px 0 0 #fff; }
  .side {
    width: 148px; box-sizing: border-box; flex: none; overflow: hidden;
    border-left: 2px solid #bbb; border-right: 3px solid #fff; padding-left: 2px;
  }
  .hd {
    height: 23px; width: 139px; margin-left: 1px; box-sizing: border-box; background: #9090ff; border-bottom: 1px solid #fff;
    color: #1c1c44; text-align: center; line-height: 22px; margin-bottom: -1px;
  }
  .hd.second { margin-top: 2px; }
  .row { height: 24px; line-height: 24px; display: flex; width: 141px; white-space: nowrap; }
  .row .val { margin-left: auto; }
  .arr { flex: none; margin: 3px 0 0 1px; display: block; }

  .t { font: 16px "Noto Sans", "Noto Sans CJK TC", sans-serif; shape-rendering: auto; }
  .ln { fill: none; stroke-width: 1; shape-rendering: crispEdges; }
  .ln.heavy { stroke-width: 4.5; }
  .dash { stroke: #888; stroke-dasharray: 2 4; fill: none; }

  .yel { color: #ffff00; }
  .grn { color: #22cc44; }
  .red { color: #ff4d4d; }
  .blu { color: #3399ff; }
  .oli { color: #88aa00; }
  .ora { color: #ff9900; }
  .wht { color: #f4f4f4; }
</style>
